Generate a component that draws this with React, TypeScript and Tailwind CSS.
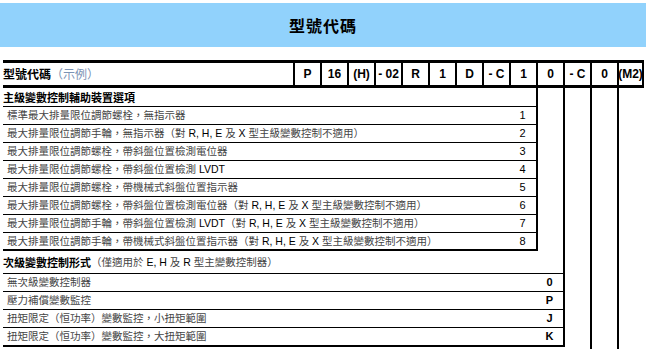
import React from "react";

const codes = ["P", "16", "(H)", "- 02", "R", "1", "D", "- C", "1", "0", "- C", "0", "(M2)"];

function Txt({ s }: { s: string }) {
  const parts = s.split(/([\x00-\x7F]+)/).filter((p) => p.length > 0);
  return (
    <>
      {parts.map((p, i) =>
        /^[\x00-\x7F]+$/.test(p) ? (
          <span key={i} className="text-black whitespace-pre">{p}</span>
        ) : (
          <span key={i} className="text-[#454545]">{p}</span>
        )
      )}
    </>
  );
}

const sec1 = [
  ["標準最大排量限位調節螺栓，無指示器", "1"],
  ["最大排量限位調節手輪，無指示器（對 R, H, E 及 X 型主級變數控制不適用）", "2"],
  ["最大排量限位調節螺栓，帶斜盤位置檢測電位器", "3"],
  ["最大排量限位調節螺栓，帶斜盤位置檢測 LVDT", "4"],
  ["最大排量限位調節螺栓，帶機械式斜盤位置指示器", "5"],
  ["最大排量限位調節螺栓，帶斜盤位置檢測電位器（對 R, H, E 及 X 型主級變數控制不適用）", "6"],
  ["最大排量限位調節手輪，帶斜盤位置檢測 LVDT（對 R, H, E 及 X 型主級變數控制不適用）", "7"],
  ["最大排量限位調節手輪，帶機械式斜盤位置指示器（對 R, H, E 及 X 型主級變數控制不適用）", "8"],
];

const sec2 = [
  ["無次級變數控制器", "0"],
  ["壓力補償變數監控", "P"],
  ["扭矩限定（恒功率）變數監控，小扭矩範圍", "J"],
  ["扭矩限定（恒功率）變數監控，大扭矩範圍", "K"],
];

export default function App() {
  return (
    <div className="w-[648px] h-[349px] overflow-hidden bg-white flex flex-col font-['Liberation_Sans','Noto_Sans_CJK_TC',sans-serif] text-black">
      <div className="mt-[3px] w-[646px] h-[44px] bg-[#91d2fc] flex items-center justify-center">
        <span className="text-[16px] font-bold font-['Noto_Sans_CJK_TC',sans-serif] tracking-[1px] leading-none">型號代碼</span>
      </div>

      <div className="mt-[13px] ml-[3px] w-[641px] h-[28px] border-t-[3px] border-b-[3px] border-black grid grid-cols-[290px_repeat(13,27px)]">
        <div className="flex items-center text-[12px] leading-none">
          <span className="font-bold font-['Noto_Sans_CJK_TC',sans-serif]">型號代碼</span>
          <span className="text-[#7b93b5] font-['Noto_Sans_CJK_TC',sans-serif]">（示例）</span>
        </div>
        {codes.map((c, i) => (
          <div
            key={i}
            className={
              i === codes.length - 1
                ? "border-l-2 border-r-2 border-black flex items-center justify-center text-[12px] font-bold whitespace-nowrap"
                : "border-l-2 border-black flex items-center justify-center text-[12px] font-bold whitespace-nowrap"
            }
          >
            {c}
          </div>
        ))}
      </div>

      <div className="ml-[3px] flex flex-1">
        <div className="w-[562px] flex flex-col">
          <div className="flex">
            <div className="w-[535px] border-r-2 border-b-2 border-black flex flex-col">
              <div className="h-[19px] border-b border-black flex items-center text-[11px] font-bold font-['Noto_Sans_CJK_TC',sans-serif] leading-none">
                主級變數控制輔助裝置選項
              </div>
              {sec1.map(([t, c], i) => (
                <div
                  key={i}
                  className={
                    i === sec1.length - 1
                      ? "h-[16px] flex items-center text-[10.5px] leading-none"
                      : "h-[18px] border-b border-black flex items-center text-[10.5px] leading-none"
                  }
                >
                  <div className="flex-1 pl-[4px] whitespace-nowrap">
                    <Txt s={t} />
                  </div>
                  <div className="w-[27px] text-center text-[11px]">{c}</div>
                </div>
              ))}
            </div>
            <div className="w-[27px] border-r-2 border-black" />
          </div>

          <div className="w-[562px] border-r-2 border-b-2 border-black flex flex-col">
            <div className="h-[23px] border-b border-black flex items-center text-[11px] leading-none whitespace-nowrap">
              <span className="font-bold font-['Noto_Sans_CJK_TC',sans-serif]">次級變數控制形式</span>
              <span className="text-[10.5px]">
                <Txt s="（僅適用於 E, H 及 R 型主變數控制器）" />
              </span>
            </div>
            {sec2.map(([t, c], i) => (
              <div
                key={i}
                className={
                  i === sec2.length - 1
                    ? "h-[17px] flex items-center text-[10.5px] leading-none"
                    : "h-[18px] border-b border-black flex items-center text-[10.5px] leading-none"
                }
              >
                <div className="flex-1 pl-[4px] whitespace-nowrap">
                  <Txt s={t} />
                </div>
                <div className="w-[27px] text-center text-[11px] font-bold">{c}</div>
              </div>
            ))}
          </div>
        </div>
        <div className="w-[27px] border-r-2 border-black" />
        <div className="w-[27px] border-r-2 border-black" />
      </div>
    </div>
  );
}
